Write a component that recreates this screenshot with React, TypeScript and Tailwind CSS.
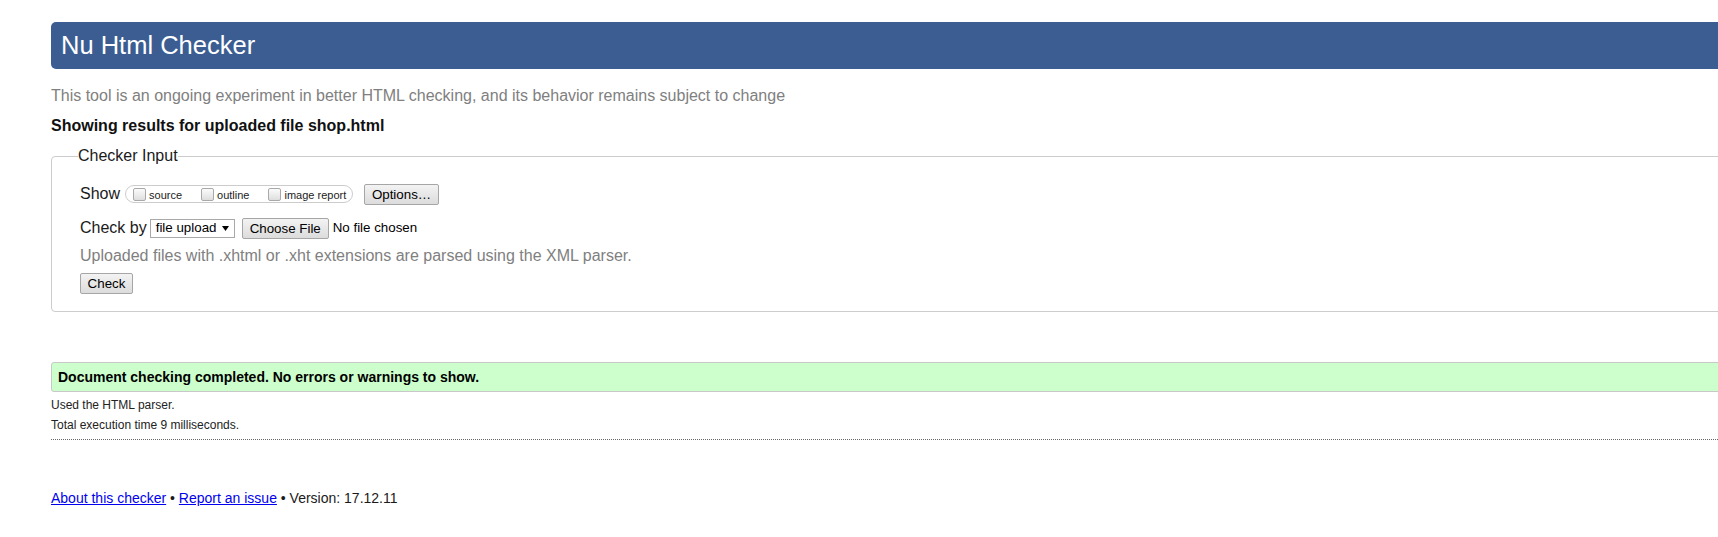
import React from "react"

const SHOW_OPTIONS = ["source", "outline", "image report"]

function FakeCheckbox() {
  return (
    <span className="inline-block w-[13px] h-[13px] rounded-[2px] border border-[#a9a9a9] bg-linear-to-b from-[#fbfbfb] to-[#dedede] shrink-0" />
  )
}

function GrayButton({ label, width }: { label: string; width: string }) {
  return (
    <span
      className={`inline-flex items-center justify-center h-[21px] ${width} rounded-[2px] border border-[#a6a6a6] bg-linear-to-b from-[#f3f3f3] to-[#dcdcdc] text-[13.33px] text-black leading-none`}
    >
      {label}
    </span>
  )
}

export default function App() {
  return (
    <div className="w-full min-h-[537px] overflow-hidden bg-white">
      <div className="w-[1800px] pl-[51px] pt-[22px] font-['Liberation_Sans',Arial,sans-serif] text-[#1a1a1a]">
        {/* banner */}
        <h1 className="h-[47px] flex items-center pl-[10px] rounded-l-[5px] bg-[#3b5d92] text-white text-[25.5px] font-normal">
          Nu Html Checker
        </h1>

        <p className="mt-[17px] text-[16px] leading-[20px] text-[#808080]">
          This tool is an ongoing experiment in better HTML checking, and its behavior remains subject to change
        </p>
        <p className="mt-[10px] text-[16px] leading-[20px] font-bold text-[#111]">
          Showing results for uploaded file shop.html
        </p>

        <fieldset className="mt-[10px] border border-[#cccccc] rounded-[4px] pl-[26px] pb-[17px]">
          <legend className="text-[16px] leading-[20px] text-[#1a1a1a]">Checker Input</legend>

          <div className="pl-[2px] pt-[17px]">
            <div className="h-[22px] flex items-center">
              <span className="text-[16px]">Show</span>
              <span className="ml-[5px] h-[18px] w-[228px] flex items-center rounded-full border border-[#cccccc] pl-[7px] gap-[19px]">
                {SHOW_OPTIONS.map((opt) => (
                  <span key={opt} className="flex items-center gap-[3px]">
                    <FakeCheckbox />
                    <span className="text-[11px] leading-none pt-[3px] text-[#222]">{opt}</span>
                  </span>
                ))}
              </span>
              <span className="ml-[11px]">
                <GrayButton label="Options…" width="w-[75px]" />
              </span>
            </div>

            <div className="mt-[12px] h-[22px] flex items-center">
              <span className="text-[16px]">Check by</span>
              <span className="ml-[3px] h-[19px] w-[85px] flex items-center justify-between border border-[#a9a9a9] bg-white pl-[5px] pr-[5px] text-[13.33px] text-black">
                file upload
                <svg width="7" height="5" viewBox="0 0 7 5" className="mt-[1px]">
                  <polygon points="0,0 7,0 3.5,5" fill="#000" />
                </svg>
              </span>
              <span className="ml-[7px]">
                <GrayButton label="Choose File" width="w-[87px]" />
              </span>
              <span className="ml-[4px] text-[13.33px] text-black">No file chosen</span>
            </div>

            <p className="mt-[7px] text-[16px] leading-[20px] text-[#808080]">
              Uploaded files with .xhtml or .xht extensions are parsed using the XML parser.
            </p>

            <div className="mt-[7px] flex">
              <GrayButton label="Check" width="w-[53px]" />
            </div>
          </div>
        </fieldset>

        {/* result */}
        <div className="mt-[50px] h-[30px] flex items-center pl-[6px] rounded-l-[3px] border border-[#c8c8c8] bg-[#ccffcc] text-[14px] font-bold text-black">
          Document checking completed. No errors or warnings to show.
        </div>
        <p className="mt-[3px] text-[12px] leading-[20px] text-[#222]">Used the HTML parser.</p>
        <p className="text-[12px] leading-[20px] text-[#222]">Total execution time 9 milliseconds.</p>
        <div className="mt-[4px] border-t border-dotted border-[#666]" />

        <p className="mt-[48px] text-[14px] leading-[20px] text-[#1a1a1a]">
          <a href="#" className="text-[#0000ee] underline">About this checker</a>
          {" • "}
          <a href="#" className="text-[#0000ee] underline">Report an issue</a>
          {" • Version: 17.12.11"}
        </p>
      </div>
    </div>
  )
}
